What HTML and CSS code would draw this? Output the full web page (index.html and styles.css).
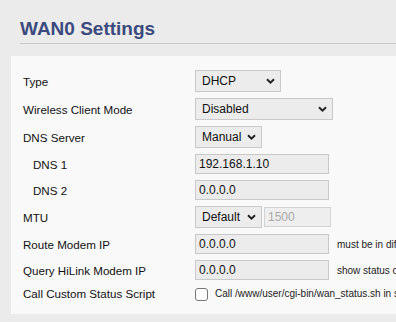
FILE: index.html
```html
<!DOCTYPE html>
<html lang="en">
<head>
  <meta charset="UTF-8" />
  <title>WAN0 Settings</title>
  <link rel="stylesheet" href="styles.css">
</head>
<body>
  <div class="page">
    <h1 class="section-title">WAN0 Settings</h1>

    <div class="settings-card">
      <div class="field-label">Type</div>
      <div class="field-control">
        <select class="select select-type">
          <option>DHCP</option>
        </select>
      </div>

      <div class="field-label">Wireless Client Mode</div>
      <div class="field-control">
        <select class="select select-wide">
          <option>Disabled</option>
        </select>
      </div>

      <div class="field-label">DNS Server</div>
      <div class="field-control">
        <select class="select select-short">
          <option>Manual</option>
        </select>
      </div>

      <div class="field-label indent">DNS 1</div>
      <div class="field-control">
        <input class="text-input" type="text" value="192.168.1.10">
      </div>

      <div class="field-label indent">DNS 2</div>
      <div class="field-control">
        <input class="text-input" type="text" value="0.0.0.0">
      </div>

      <div class="field-label">MTU</div>
      <div class="field-control">
        <select class="select select-short">
          <option>Default</option>
        </select>
        <input class="text-input mtu-input" type="text" value="1500" disabled>
      </div>

      <div class="field-label">Route Modem IP</div>
      <div class="field-control">
        <input class="text-input" type="text" value="0.0.0.0">
        <span class="hint">must be in different subnet to router, 0.0.0.0 to disable</span>
      </div>

      <div class="field-label">Query HiLink Modem IP</div>
      <div class="field-control">
        <input class="text-input" type="text" value="0.0.0.0">
        <span class="hint">show status of HiLink modem, 0.0.0.0 to disable</span>
      </div>

      <div class="field-label">Call Custom Status Script</div>
      <div class="field-control">
        <input class="checkbox" type="checkbox">
        <span class="hint check-hint">Call /www/user/cgi-bin/wan_status.sh in status page</span>
      </div>
    </div>
  </div>
</body>
</html>
```

FILE: styles.css
```css
:root {
  --page-bg: #ebebeb;
  --card-bg: #f9f9f9;
  --title-color: #3c4a7d;
  --field-bg: #ececec;
  --field-border: #c9c9c9;
  --text-main: #111;
}

* {
  margin: 0;
  padding: 0;
  box-sizing: border-box;
}

html, body {
  overflow: hidden;
}

body {
  background: var(--page-bg);
  color: var(--text-main);
  font-family: "Liberation Sans", Arial, sans-serif;
  font-size: 11.6px;
  width: 396px;
  height: 322px;
}

.page {
  width: 640px;
  padding-top: 18px;
}

.section-title {
  margin-left: 20px;
  font-size: 19px;
  line-height: 22px;
  font-weight: bold;
  color: var(--title-color);
  padding-bottom: 3px;
  border-bottom: 1px solid #c8c8c8;
}

.settings-card {
  margin: 12px 0 0 11px;
  background: var(--card-bg);
  padding: 14px 12px 13px;
  display: grid;
  grid-template-columns: 172px auto;
  row-gap: 6px;
  align-items: center;
}

.field-label {
  white-space: nowrap;
}

.field-label.indent {
  padding-left: 10px;
}

.field-control {
  display: flex;
  align-items: center;
  white-space: nowrap;
}

.select {
  appearance: none;
  -webkit-appearance: none;
  height: 22px;
  padding: 0 18px 0 6px;
  font-family: inherit;
  font-size: 12px;
  color: var(--text-main);
  background-color: var(--field-bg);
  background-image: url("data:image/svg+xml;utf8,<svg xmlns='http://www.w3.org/2000/svg' width='9' height='6' viewBox='0 0 9 6'><path d='M1 1.2 L4.5 4.6 L8 1.2' fill='none' stroke='%23222' stroke-width='2'/></svg>");
  background-repeat: no-repeat;
  background-position: right 5px center;
  border: 1px solid var(--field-border);
  border-radius: 0;
}

.select-type {
  width: 86px;
}

.select-wide {
  width: 138px;
}

.select-short {
  width: 67px;
}

.text-input {
  width: 134px;
  height: 20px;
  padding: 0 3px;
  font-family: inherit;
  font-size: 12px;
  color: var(--text-main);
  background: var(--field-bg);
  border: 1px solid var(--field-border);
}

.mtu-input {
  width: 67px;
  margin-left: 2px;
  color: #a9a9a9;
  background: #eeeeee;
  border-color: #d3d3d3;
}

.hint {
  margin-left: 8px;
  font-size: 10px;
  color: #222;
}

.checkbox {
  appearance: none;
  -webkit-appearance: none;
  width: 13px;
  height: 13px;
  margin-top: 2px;
  background: #fff;
  border: 1px solid #767676;
  border-radius: 3px;
}

.check-hint {
  margin-left: 7px;
}
```
